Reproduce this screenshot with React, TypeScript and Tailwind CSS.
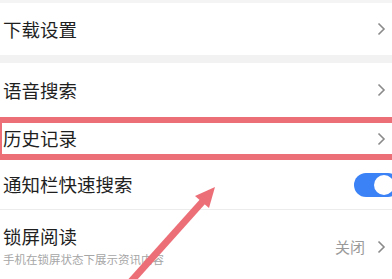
import React from 'react'

const font = { fontFamily: '"Noto Sans CJK SC", "Noto Sans", sans-serif' }

function Chevron() {
  return (
    <svg width="9" height="14" viewBox="0 0 9 14" className="shrink-0">
      <path d="M1.5 1.5 L7 7 L1.5 12.5" fill="none" stroke="#8a8a8a" strokeWidth="1.6" />
    </svg>
  )
}

export default function App() {
  return (
    <div className="relative w-[392px] h-[279px] overflow-hidden bg-white text-[#1f1f1f]" style={font}>
      <div className="h-[3px] bg-[#f4f4f4]" />

      {/* 下载设置 */}
      <div className="flex items-center justify-between h-[52px] pl-[3px] pr-[6px]">
        <span className="text-[18.5px] leading-none">下载设置</span>
        <Chevron />
      </div>

      <div className="h-[8px] bg-[#f2f2f2]" />

      {/* 语音搜索 */}
      <div className="flex items-center justify-between h-[54px] pl-[3px] pr-[6px]">
        <span className="text-[18.5px] leading-none">语音搜索</span>
        <Chevron />
      </div>

      {/* 历史记录 (highlighted) */}
      <div className="flex items-center justify-between h-[43px] border-y-[6px] border-l-2 border-[#ec6f78] pl-[1px] pr-[6px]">
        <span className="text-[18.5px] leading-none">历史记录</span>
        <Chevron />
      </div>

      {/* 通知栏快速搜索 */}
      <div className="flex items-center justify-between h-[50px] pl-[3px] border-b border-[#ececec]">
        <span className="text-[18.5px] leading-none">通知栏快速搜索</span>
        <div className="flex items-center w-[46px] h-[24px] rounded-full bg-[#3b82f6] pl-[20px] mr-[-8px]">
          <div className="w-[20px] h-[20px] rounded-full bg-white" />
        </div>
      </div>

      {/* 锁屏阅读 */}
      <div className="flex items-center justify-between pl-[3px] pr-[6px] pt-[15px]">
        <div className="flex flex-col">
          <span className="text-[18.5px] leading-[22px]">锁屏阅读</span>
          <span className="text-[11.5px] leading-[16px] mt-[4px] text-[#a6a6a6]">手机在锁屏状态下展示资讯内容</span>
        </div>
        <div className="flex items-center gap-[12px] mt-[2px]">
          <span className="text-[15px] text-[#9a9a9a]">关闭</span>
          <Chevron />
        </div>
      </div>

      {/* annotation arrow */}
      <svg className="absolute left-0 top-0 pointer-events-none" width="392" height="279" viewBox="0 0 392 279">
        <line x1="126" y1="287" x2="204" y2="200" stroke="#ec6f78" strokeWidth="7" />
        <polygon points="215,187 195,196 209,208" fill="#ec6f78" />
      </svg>
    </div>
  )
}
